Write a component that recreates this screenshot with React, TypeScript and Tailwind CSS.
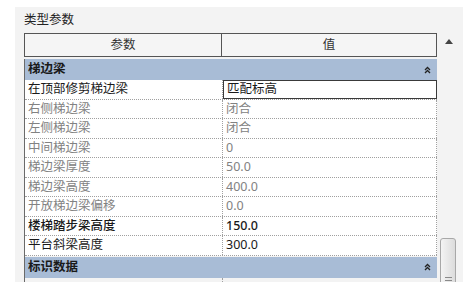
import React from 'react';

type Row = { label: string; value: string; kind: 'edit' | 'off' | 'on' | 'strong' };

const rows: Row[] = [
  { label: '在顶部修剪梯边梁', value: '匹配标高', kind: 'edit' },
  { label: '右侧梯边梁', value: '闭合', kind: 'off' },
  { label: '左侧梯边梁', value: '闭合', kind: 'off' },
  { label: '中间梯边梁', value: '0', kind: 'off' },
  { label: '梯边梁厚度', value: '50.0', kind: 'off' },
  { label: '梯边梁高度', value: '400.0', kind: 'off' },
  { label: '开放梯边梁偏移', value: '0.0', kind: 'off' },
  { label: '楼梯踏步梁高度', value: '150.0', kind: 'strong' },
  { label: '平台斜梁高度', value: '300.0', kind: 'on' },
];

function Collapse() {
  return (
    <svg width="7" height="8" viewBox="0 0 7 8" className="mr-[6px]">
      <path d="M1 4 L3.5 1.5 L6 4 M1 7 L3.5 4.5 L6 7" fill="none" stroke="#222" strokeWidth="1.3" />
    </svg>
  );
}

function Group({ title }: { title: string }) {
  return (
    <div className="h-[21px] bg-[#a8bcd6] flex items-center justify-between pl-[3px] text-[#1a1a1a] font-bold">
      <span>{title}</span>
      <Collapse />
    </div>
  );
}

function ParamRow({ row }: { row: Row }) {
  const tone = row.kind === 'off' ? 'text-[#828282]' : 'text-[#1a1a1a]';
  const weight = row.kind === 'strong' ? 'font-medium' : '';
  return (
    <div className="h-[19.5px] flex bg-white border-b border-dotted border-[#a0a0a0]">
      <div className={`w-[198px] shrink-0 pl-[3px] flex items-center border-r border-dotted border-[#a0a0a0] ${tone} ${weight}`}>
        {row.label}
      </div>
      {row.kind === 'edit' ? (
        <div className="flex-1 flex items-center pl-[3px] border border-[#3a3a3a] text-[#1a1a1a]">{row.value}</div>
      ) : (
        <div className={`flex-1 flex items-center pl-[3px] border-r border-dotted border-[#a0a0a0] ${tone} ${weight}`}>
          {row.value}
        </div>
      )}
    </div>
  );
}

export default function App() {
  return (
    <div
      className="w-[469px] h-[296px] bg-white overflow-hidden text-[12.5px] leading-none"
      style={{ fontFamily: '"Noto Sans", "Noto Sans CJK SC", sans-serif' }}
    >
      <div className="ml-[15px] mt-[7px] w-[448px] h-[275px] bg-[#f3f3f3] overflow-hidden pl-[9px]">
        <div className="h-[26px] flex items-center text-[#222]">类型参数</div>
        <div className="flex">
          {/* Table */}
          <div className="w-[413px] shrink-0">
            <div className="h-[24px] flex border border-[#555] bg-[#f5f5f5] text-[#333]">
              <div className="w-[197px] shrink-0 flex items-center justify-center border-r border-[#555]">参数</div>
              <div className="flex-1 flex items-center justify-center">值</div>
            </div>
            <div className="mt-[2px] border-l border-[#6a6a6a]">
              <Group title="梯边梁" />
              {rows.map((r) => (
                <ParamRow key={r.label} row={r} />
              ))}
              <div className="h-[1px]" />
              <Group title="标识数据" />
              <div className="h-[10px] flex">
                <div className="w-[198px] border-r border-dotted border-[#a0a0a0]" />
              </div>
            </div>
          </div>
          {/* Scrollbar */}
          <div className="flex-1 relative">
            <svg width="8" height="5" viewBox="0 0 8 5" className="absolute left-[8px] top-[6px]">
              <path d="M0 5 L4 0 L8 5 Z" fill="#444" />
            </svg>
            <div className="absolute left-[3px] top-[205px] w-[16px] h-[60px] rounded-t-[3px] border border-[#a8a8a8] bg-gradient-to-r from-[#f4f4f4] to-[#dcdcdc] flex flex-col items-center pt-[38px] gap-[2px]">
              <div className="w-[7px] h-px bg-[#8a8a8a]" />
              <div className="w-[7px] h-px bg-[#8a8a8a]" />
              <div className="w-[7px] h-px bg-[#8a8a8a]" />
            </div>
          </div>
        </div>
      </div>
    </div>
  );
}
